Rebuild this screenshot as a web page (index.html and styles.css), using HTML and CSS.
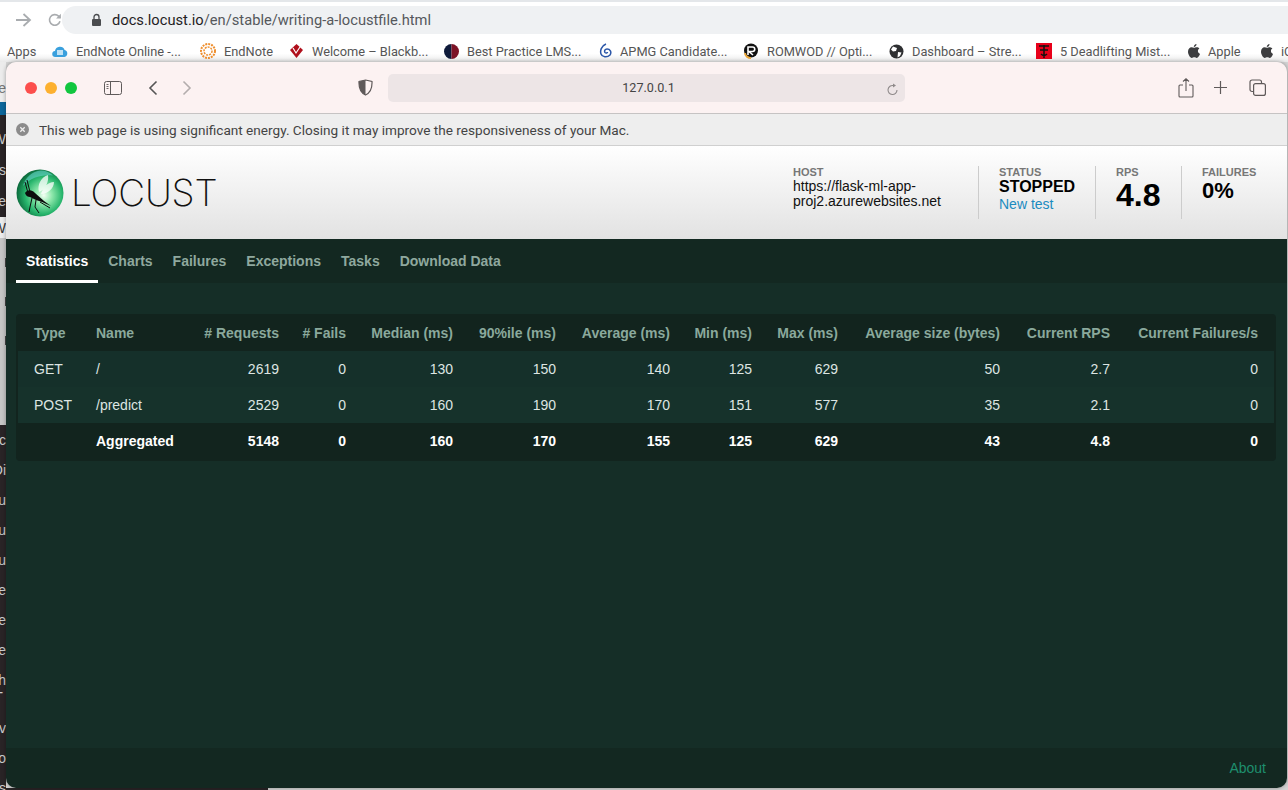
FILE: index.html
```html
<!DOCTYPE html>
<html lang="en">
<head>
    <meta charset="UTF-8">
    <meta name="viewport" content="width=device-width, initial-scale=1.0">
    <title>Locust</title>
    <link rel="stylesheet" href="styles.css">
</head>
<body>
    <!-- Chrome window behind -->
    <div class="chrome-top">
        <svg class="nav-arrow" width="18" height="16" viewBox="0 0 18 16"><path d="M2 8h14M9.500 2l6.500 6-6.500 6" fill="none" stroke="#a9acaf" stroke-width="1.800"/></svg>
        <svg class="nav-reload" width="16" height="16" viewBox="0 0 18 18"><path d="M14.600 10.500A6 6 0 1 1 13 4.600L15 6.500" fill="none" stroke="#a9acaf" stroke-width="1.800"/><path d="M15.600 2v5.400h-5.400z" fill="#a9acaf"/></svg>
        <div class="omnibox">
            <svg width="11" height="14" viewBox="0 0 11 14"><rect x="1" y="6" width="9" height="7" rx="1" fill="#4a4c4f"/><path d="M3 6.500V4a2.500 2.500 0 0 1 5 0v2.500" fill="none" stroke="#4a4c4f" stroke-width="1.300"/></svg>
            <span class="url"><b>docs.locust.io</b>/en/stable/writing-a-locustfile.html</span>
        </div>
    </div>
    <div class="bookmarks">
        <span class="mark">Apps</span>
        <span class="mark">
            <svg width="16" height="14" viewBox="0 0 16 14"><path d="M3.500 13a3 3 0 0 1-.5-6 5 5 0 0 1 9.600-1A3.600 3.600 0 0 1 12.500 13z" fill="#3aa0dd"/><rect x="5" y="6" width="6" height="5" fill="#bfe2f5"/></svg>
            EndNote Online -...
        </span>
        <span class="mark">
            <svg width="16" height="16" viewBox="0 0 16 16" fill="none" stroke="#ee8f2f"><circle cx="8" cy="8" r="7" stroke-width="2" stroke-dasharray="2 1"/><circle cx="8" cy="8" r="4" stroke-width="1.500" stroke-dasharray="2 1"/></svg>
            EndNote
        </span>
        <span class="mark">
            <svg width="15" height="16" viewBox="0 0 15 16"><path d="M7.500 1L14 7 7.500 15 1 7z" fill="#b0101c"/><path d="M4 5l3 5 4-6" fill="none" stroke="#fff" stroke-width="1.200"/></svg>
            Welcome – Blackb...
        </span>
        <span class="mark">
            <svg width="15" height="15" viewBox="0 0 15 15"><path d="M7.500 0a7.500 7.500 0 0 0 0 15z" fill="#0e1a3a"/><path d="M7.500 0a7.500 7.500 0 0 1 0 15z" fill="#7c1226"/></svg>
            Best Practice LMS...
        </span>
        <span class="mark">
            <svg width="13" height="16" viewBox="0 0 13 16" fill="none" stroke="#2c57a8" stroke-width="1.500"><path d="M7 1C2 3 1 8 2 11c1 3 6 4 9 1 2-3 0-6-3-6-2 0-3 2-2 3.500 1 1 2.500.5 2.500-.5"/></svg>
            APMG Candidate...
        </span>
        <span class="mark">
            <svg width="16" height="16" viewBox="0 0 16 16"><circle cx="8" cy="7.500" r="7" fill="#111"/><path d="M5 12V4h4.500a2 2 0 0 1 0 4.500H6l4 3.500" fill="none" stroke="#fff" stroke-width="1.600"/><path d="M2 10c0 3 3 5 6 5" fill="none" stroke="#eaa63a" stroke-width="2"/></svg>
            ROMWOD // Opti...
        </span>
        <span class="mark">
            <svg width="15" height="15" viewBox="0 0 15 15"><circle cx="7.500" cy="7.500" r="7" fill="#2e2f31"/><path d="M4 2.500l4 1.500-1 3-3 .5-2-2zM9 8l3.500.5L11 12l-2.500 1.500z" fill="#fff"/></svg>
            Dashboard – Stre...
        </span>
        <span class="mark">
            <svg width="16" height="16" viewBox="0 0 16 16"><rect width="16" height="16" fill="#e8001a"/><path d="M3 3h10M8 2v13M4 7h8M5 11c2 2 4 2 6 0" fill="none" stroke="#111" stroke-width="1.500"/></svg>
            5 Deadlifting Mist...
        </span>
        <span class="mark">
            <svg width="12" height="14" viewBox="0 0 12 14"><path d="M8.500 0c.1 1.600-1.200 3-2.700 3C5.700 1.500 7 .2 8.500 0zM6 3.800c.8 0 1.600-.6 2.800-.6 1 0 2 .5 2.600 1.400-2.200 1.300-1.900 4.300.6 5.300-.6 1.500-1.900 4-3.300 4-.9 0-1.300-.6-2.400-.6s-1.600.6-2.500.6C2.100 13.900 0 10.500 0 7.800 0 5 1.800 3.300 3.500 3.300c1 0 1.900.5 2.500.5z" fill="#3c3d3f"/></svg>
            Apple
        </span>
        <span class="mark">
            <svg width="12" height="14" viewBox="0 0 12 14"><path d="M8.500 0c.1 1.600-1.200 3-2.700 3C5.700 1.500 7 .2 8.500 0zM6 3.800c.8 0 1.600-.6 2.800-.6 1 0 2 .5 2.600 1.400-2.200 1.300-1.900 4.300.6 5.300-.6 1.500-1.900 4-3.300 4-.9 0-1.300-.6-2.400-.6s-1.600.6-2.500.6C2.100 13.900 0 10.500 0 7.800 0 5 1.800 3.300 3.500 3.300c1 0 1.900.5 2.500.5z" fill="#3c3d3f"/></svg>
            iCloud
        </span>
    </div>

    <!-- bits of the docs page that show around the Safari window -->
    <div class="behind">
        <div class="strip">
            <div class="band band-tab"><span>Ge</span></div>
            <div class="band band-blue"></div>
            <div class="band band-side">
                <span>W</span><span>ns</span><span>Ge</span>
            </div>
            <div class="band band-white"><span>W</span></div>
            <div class="band band-grey">
                <i></i><i></i><i></i>
            </div>
            <div class="band band-dark">
                <span>Ec</span><span>Di</span><span>Eu</span><span>Eu</span><span>Eu</span><span>Re</span><span>Fe</span><span>Fe</span><span class="tight">nh<br>IT</span><span>v</span><span>o</span><span>Us</span>
            </div>
        </div>
        <div class="page-rest"><div class="page-sidebar"></div></div>
    </div>

    <!-- Safari window -->
    <div class="safari">
        <div class="toolbar">
            <div class="lights">
                <span class="light red"></span>
                <span class="light amber"></span>
                <span class="light green"></span>
            </div>
            <svg class="tb-sidebar" width="18" height="14" viewBox="0 0 18 14" fill="none" stroke="#5f5a5a"><rect x=".5" y=".5" width="17" height="13" rx="2"/><path d="M6.500 .5v13"/><path d="M2.500 3.500h2M2.500 5.500h2M2.500 7.500h2" stroke-width=".9"/></svg>
            <svg class="tb-back" width="10" height="16" viewBox="0 0 10 16"><path d="M8.500 1.500L2 8l6.500 6.500" fill="none" stroke="#555" stroke-width="1.600"/></svg>
            <svg class="tb-forward" width="10" height="16" viewBox="0 0 10 16"><path d="M1.500 1.500L8 8l-6.500 6.500" fill="none" stroke="#b3adad" stroke-width="1.600"/></svg>
            <svg class="tb-shield" width="15" height="17" viewBox="0 0 15 17"><path d="M7.500 1L14 2.500C14.300 9 12 14 7.500 16 3 14 .7 9 1 2.500z" fill="#fdf3f3" stroke="#5f5a5a" stroke-width="1.200"/><path d="M7.500 1L1 2.500C.7 9 3 14 7.500 16z" fill="#5f5a5a"/></svg>
            <div class="address">
                <span>127.0.0.1</span>
                <svg class="addr-reload" width="12" height="13" viewBox="0 0 12 13"><path d="M10 7a4.500 4.500 0 1 1-3.500-4.400" fill="none" stroke="#8f8a8a" stroke-width="1.100"/><path d="M6 .5l3 2-3 2z" fill="#8f8a8a"/></svg>
            </div>
            <svg class="tb-share" width="16" height="20" viewBox="0 0 16 20" fill="none" stroke="#5f5a5a" stroke-width="1.100"><path d="M5 7H2a1 1 0 0 0-1 1v10a1 1 0 0 0 1 1h12a1 1 0 0 0 1-1V8a1 1 0 0 0-1-1h-3M8 13V1M5 3.500L8 .8l3 2.700"/></svg>
            <svg class="tb-plus" width="13" height="13" viewBox="0 0 13 13"><path d="M6.500 0v13M0 6.500h13" stroke="#5f5a5a" stroke-width="1.200"/></svg>
            <svg class="tb-tabs" width="17" height="17" viewBox="0 0 17 17" fill="none" stroke="#5f5a5a" stroke-width="1.200"><rect x="4.600" y="4.600" width="11.800" height="11.800" rx="2"/><path d="M4.600 12.500H3a2 2 0 0 1-2-2V3a2 2 0 0 1 2-2h7.500a2 2 0 0 1 2 2v1.600"/></svg>
        </div>
        <div class="energy-bar">
            <svg width="13" height="13" viewBox="0 0 13 13"><circle cx="6.500" cy="6.500" r="6.500" fill="#8b8b8b"/><path d="M4.300 4.300l4.400 4.400M8.700 4.300l-4.400 4.400" stroke="#eee" stroke-width="1.300"/></svg>
            <span>This web page is using significant energy. Closing it may improve the responsiveness of your Mac.</span>
        </div>

        <div class="header">
            <div class="logo">
                <svg width="48" height="48" viewBox="0 0 48 48">
                    <defs>
                        <radialGradient id="ball" cx="58%" cy="55%" r="58%">
                            <stop offset="0" stop-color="#f4fff4"/>
                            <stop offset=".3" stop-color="#8fe8ac"/>
                            <stop offset=".68" stop-color="#27b56c"/>
                            <stop offset="1" stop-color="#0b6a3c"/>
                        </radialGradient>
                    </defs>
                    <circle cx="24" cy="24" r="23.500" fill="url(#ball)"/>
                    <path d="M7 17C9 9 16 2 25 1.500c5 0 9 2 12 5C27 5 15 8 7 17z" fill="#66d6cc" opacity=".6"/>
                    <path d="M23 23C21 16 25 8 32 6c1 6-2 14-9 17zM25 25c2-7 7-12 13-12 0 6-6 12-13 12z" fill="#fff" opacity=".75"/>
                    <path d="M9 24c3-4 7-3 10 0l9 8 7 5-9-4-6-2-6-3c-2 0-4-1-5-4z" fill="#0c0c0c"/>
                    <path d="M12 24L9 13M14 23L11 11M16 29l-2 9-1 5M20 31l-1 7 4 6M24 33l10 6" fill="none" stroke="#0c0c0c" stroke-width="1"/>
                </svg>
                <span class="logo-text">LOCUST</span>
            </div>
            <div class="stats">
                <div class="stat stat-host">
                    <div class="stat-label">Host</div>
                    <div class="stat-host-value">https://flask-ml-app-proj2.azurewebsites.net</div>
                </div>
                <div class="stat">
                    <div class="stat-label">Status</div>
                    <div class="stat-status">STOPPED</div>
                    <a class="new-test" href="#">New test</a>
                </div>
                <div class="stat">
                    <div class="stat-label">RPS</div>
                    <div class="stat-rps">4.8</div>
                </div>
                <div class="stat stat-last">
                    <div class="stat-label">Failures</div>
                    <div class="stat-fail">0%</div>
                </div>
            </div>
        </div>

        <ul class="tabs">
            <li class="active">Statistics</li>
            <li>Charts</li>
            <li>Failures</li>
            <li>Exceptions</li>
            <li>Tasks</li>
            <li>Download Data</li>
        </ul>

        <div class="main">
            <div class="table-wrap">
                <table>
                    <colgroup>
                        <col class="c-type"><col class="c-name"><col class="c-req"><col class="c-fails"><col class="c-median"><col class="c-90"><col class="c-avg"><col class="c-min"><col class="c-max"><col class="c-size"><col class="c-rps"><col class="c-cf">
                    </colgroup>
                    <thead>
                        <tr>
                            <th class="left">Type</th><th class="left">Name</th><th># Requests</th><th># Fails</th><th>Median (ms)</th><th>90%ile (ms)</th><th>Average (ms)</th><th>Min (ms)</th><th>Max (ms)</th><th>Average size (bytes)</th><th>Current RPS</th><th>Current Failures/s</th>
                        </tr>
                    </thead>
                    <tbody>
                        <tr>
                            <td class="left">GET</td><td class="left">/</td><td>2619</td><td>0</td><td>130</td><td>150</td><td>140</td><td>125</td><td>629</td><td>50</td><td>2.7</td><td>0</td>
                        </tr>
                        <tr>
                            <td class="left">POST</td><td class="left">/predict</td><td>2529</td><td>0</td><td>160</td><td>190</td><td>170</td><td>151</td><td>577</td><td>35</td><td>2.1</td><td>0</td>
                        </tr>
                        <tr class="total">
                            <td class="left"></td><td class="left">Aggregated</td><td>5148</td><td>0</td><td>160</td><td>170</td><td>155</td><td>125</td><td>629</td><td>43</td><td>4.8</td><td>0</td>
                        </tr>
                    </tbody>
                </table>
            </div>
        </div>

        <div class="footer"><a href="#">About</a></div>
    </div>
</body>
</html>
```

FILE: styles.css
```css
/* Page */
html, body {
    margin: 0;
    height: 790px;
    overflow: hidden;
}

body {
    position: relative;
    display: flex;
    flex-direction: column;
    font-family: 'Liberation Sans', Arial, sans-serif;
    background: #fff;
}

/* Chrome window behind */
.chrome-top {
    height: 34px;
    box-sizing: border-box;
    padding-top: 6px;
    border-top: 2px solid #e4e7ea;
    background: #fff;
    display: flex;
    align-items: flex-start;
}

.nav-arrow {
    margin: 4px 0 0 14px;
}

.nav-reload {
    margin: 4px 0 0 15px;
}

.omnibox {
    flex: 1;
    height: 28px;
    margin: -2px 0 0 -1px;
    padding-left: 29px;
    border-radius: 14px 0 0 14px;
    background: #eff1f3;
    display: flex;
    align-items: center;
    gap: 10px;
}

.url {
    font-family: Roboto, 'Liberation Sans', sans-serif;
    font-size: 14.7px;
    color: #55585c;
}

.url b {
    font-weight: normal;
    color: #1f2124;
}

.bookmarks {
    height: 28px;
    box-sizing: border-box;
    padding: 6px 0 0 7px;
    display: grid;
    grid-template-columns: 45px 148px 89px 155px 155px 144px 146px 147px 152px 73px auto;
    align-items: center;
    background: linear-gradient(#fff 70%, #e9e9e9);
    font-family: Roboto, 'Liberation Sans', sans-serif;
    font-size: 12.8px;
    color: #555;
    white-space: nowrap;
    overflow: hidden;
}

.mark {
    display: flex;
    align-items: center;
    gap: 8px;
}

/* Stuff peeking out around the Safari window */
.behind {
    flex: 1;
    display: flex;
    min-height: 0;
}

.strip {
    width: 6px;
    display: flex;
    flex-direction: column;
    overflow: hidden;
    font-size: 14px;
    color: #ccc;
}

.band {
    display: flex;
    flex-direction: column;
    align-items: flex-end;
    overflow: hidden;
    white-space: nowrap;
}

.band span {
    display: block;
}

.band .tight {
    line-height: 17px;
}

.band-tab {
    height: 40px;
    background: #ececec;
    color: #777;
    padding-top: 18px;
    box-sizing: border-box;
}

.band-blue {
    height: 13px;
    background: #0d679b;
}

.band-side {
    height: 102px;
    background: #292426;
    box-sizing: border-box;
    padding-top: 16px;
    gap: 15px;
}

.band-white {
    height: 21px;
    background: #ececec;
    color: #333;
    padding-top: 3px;
    box-sizing: border-box;
}

.band-grey {
    height: 187px;
    background: #c6c6c6;
    padding-top: 20px;
    box-sizing: border-box;
    gap: 30px;
}

.band-grey i {
    display: block;
    width: 1px;
    height: 9px;
    background: #444;
}

.band-dark {
    flex: 1;
    background: #292426;
    box-sizing: border-box;
    padding-top: 7px;
    gap: 14px;
}

.page-rest {
    flex: 1;
    background: #d4d4d4;
    display: flex;
    align-items: flex-end;
}

.page-sidebar {
    width: 262px;
    height: 2px;
    background: #292426;
}

/* Safari window, floats over the Chrome one */
.safari {
    position: absolute;
    top: 62px;
    left: 6px;
    width: 1281px;
    height: 726px;
    border-radius: 10px;
    overflow: hidden;
    display: flex;
    flex-direction: column;
    box-shadow: 0 0 4px rgba(0, 0, 0, 0.35);
}

.toolbar {
    height: 52px;
    flex-shrink: 0;
    box-sizing: border-box;
    padding-left: 19px;
    background: #fcf2f2;
    border-bottom: 1px solid #c6c3c3;
    display: flex;
    align-items: center;
}

.lights {
    display: flex;
    gap: 8px;
}

.light {
    width: 12px;
    height: 12px;
    border-radius: 50%;
}

.red { background: #fc4f4d; }
.amber { background: #fdb02f; }
.green { background: #11c63f; }

.tb-sidebar { margin-left: 27px; }
.tb-back { margin-left: 26px; }
.tb-forward { margin-left: 24px; }
.tb-shield { margin-left: 166px; }
.tb-share { margin-left: 273px; }
.tb-plus { margin-left: 20px; }
.tb-tabs { margin-left: 22px; }

.address {
    position: relative;
    width: 517px;
    height: 28px;
    box-sizing: border-box;
    padding-left: 4px;
    margin-left: 15px;
    border-radius: 5px;
    background: #ede5e6;
    display: flex;
    align-items: center;
    justify-content: center;
    font-family: Roboto, 'Liberation Sans', sans-serif;
    font-size: 12.6px;
    color: #444;
}

.addr-reload {
    position: absolute;
    right: 6px;
    top: 9px;
}

.energy-bar {
    height: 32px;
    flex-shrink: 0;
    box-sizing: border-box;
    padding-left: 10px;
    background: #eeeeee;
    border-bottom: 1px solid #d0d0d0;
    display: flex;
    align-items: center;
    gap: 10px;
    font-family: Roboto, 'Liberation Sans', sans-serif;
    font-size: 13.6px;
    color: #444;
}

/* Locust header */
.header {
    height: 93px;
    flex-shrink: 0;
    background: linear-gradient(#fff, #e2e2e2);
    display: flex;
    justify-content: space-between;
}

.logo {
    display: flex;
    align-items: center;
    gap: 8px;
    padding-left: 10px;
}

.logo-text {
    font-family: Inter, sans-serif;
    font-weight: 200;
    font-size: 37px;
    letter-spacing: -0.2px;
    margin-left: -1px;
    color: #111;
}

.stats {
    display: flex;
    padding-top: 20px;
}

.stat {
    width: 63px;
    height: 53px;
    padding: 0 0 0 20px;
    border-right: 1px solid #ccc;
}

.stat:nth-child(2) { width: 96px; }
.stat:nth-child(3) { width: 65px; }

.stat-host {
    width: 185px;
    padding-left: 0;
}

.stat-last {
    width: 85px;
    border-right: none;
}

.stat-label {
    font-size: 11px;
    line-height: 13px;
    font-weight: bold;
    text-transform: uppercase;
    color: #777;
}

.stat-host-value {
    width: 165px;
    font-size: 14px;
    line-height: 15px;
    color: #111;
}

.stat-status {
    margin-top: -1px;
    font-size: 16px;
    line-height: 17px;
    font-weight: bold;
    color: #000;
}

.new-test {
    display: block;
    margin-top: 1px;
    font-size: 14px;
    line-height: 17px;
    color: #1b8bc0;
    text-decoration: none;
}

.stat-rps {
    margin-top: -2px;
    font-size: 32px;
    line-height: 36px;
    font-weight: bold;
    color: #000;
}

.stat-fail {
    font-size: 22px;
    line-height: 24px;
    font-weight: bold;
    color: #000;
}

/* Tabs */
.tabs {
    list-style: none;
    margin: 0;
    padding: 0 0 0 10px;
    height: 44px;
    flex-shrink: 0;
    background: #132821;
    display: flex;
}

.tabs li {
    padding: 0 10px;
    line-height: 44px;
    font-size: 14px;
    font-weight: bold;
    color: #8fa89e;
    box-sizing: border-box;
    height: 44px;
}

.tabs li.active {
    color: #fff;
    border-bottom: 3px solid #fff;
}

/* Stats table */
.main {
    flex: 1;
    padding: 31px 11px 0 10px;
    background: #152e27;
}

.table-wrap {
    background: #12241e;
    border-radius: 4px;
    padding: 0 2px 2px;
}

table {
    width: 1256px;
    table-layout: fixed;
    border-collapse: collapse;
    font-size: 14px;
}

.c-type { width: 62px; }
.c-name { width: 109px; }
.c-req { width: 106px; }
.c-fails { width: 67px; }
.c-median { width: 107px; }
.c-90 { width: 103px; }
.c-avg { width: 114px; }
.c-min { width: 82px; }
.c-max { width: 86px; }
.c-size { width: 162px; }
.c-rps { width: 110px; }
.c-cf { width: 148px; }

th, td {
    padding: 0 16px 0 0;
    text-align: right;
    white-space: nowrap;
}

th.left, td.left {
    padding: 0 0 0 16px;
    text-align: left;
}

th {
    height: 37px;
    font-weight: bold;
    color: #8aa99c;
}

td {
    height: 36px;
    color: #dde5e2;
    background: #15302a;
}

tbody tr:nth-child(2) td {
    background: #16322b;
}

.total td {
    background: #12241e;
    color: #fff;
    font-weight: bold;
}

/* Footer */
.footer {
    height: 40px;
    flex-shrink: 0;
    box-sizing: border-box;
    padding: 12px 21px 0 0;
    background: #132821;
    text-align: right;
    font-size: 14px;
}

.footer a {
    color: #1e8f6e;
    text-decoration: none;
}
```
